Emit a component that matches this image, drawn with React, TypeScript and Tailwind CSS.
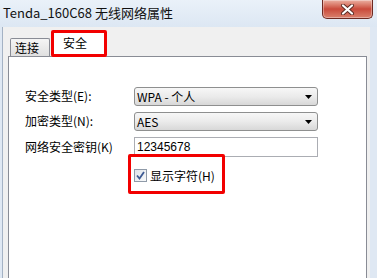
import React from 'react'

function CloseButton() {
  return (
    <div className="mr-[4px] w-[51px] h-[19px] rounded-b-[5px] border border-t-0 border-[#6e2a22] bg-gradient-to-b from-[#eab0a2] via-[#c94a3b] to-[#d9806d] flex items-center justify-center shadow-[inset_0_0_0_1px_rgba(255,255,255,0.35)]">
      <svg width="15" height="11" viewBox="0 0 15 11">
        <path d="M3 1.5 L12 9.5 M12 1.5 L3 9.5" stroke="#5a2a22" strokeWidth="4" strokeLinecap="round" />
        <path d="M3 1.5 L12 9.5 M12 1.5 L3 9.5" stroke="#ffffff" strokeWidth="2.2" strokeLinecap="round" />
      </svg>
    </div>
  )
}

function ComboBox({ value }: { value: string }) {
  return (
    <div className="h-[19px] rounded-[3px] border border-[#8e8f8f] bg-gradient-to-b from-[#f7f7f7] via-[#ebebeb] to-[#d8d8d8] flex items-center justify-between pl-[2px] pr-[5px]">
      <span className="text-[12px] leading-[17px]">{value}</span>
      <svg width="7" height="4" viewBox="0 0 7 4">
        <path d="M0 0 H7 L3.5 4 Z" fill="#000" />
      </svg>
    </div>
  )
}

export default function App() {
  return (
    <div className="w-[377px] h-[278px] overflow-hidden flex flex-col bg-[#dfe8f3] font-['Noto_Sans_CJK_SC',sans-serif] text-black">
      {/* title bar */}
      <div className="h-[27px] shrink-0 flex items-start justify-between bg-gradient-to-b from-[#eaf1f9] to-[#dce7f3]">
        <div className="pl-[3px] pt-[4px] text-[13px] leading-[18px] text-[#111]">Tenda_160C68 无线网络属性</div>
        <CloseButton />
      </div>

      {/* window body */}
      <div className="flex-1 flex flex-col ml-[2px] mr-[7px] border-l border-[#a4b2c4] bg-[#f0f0f0] pl-[5px] pr-[3px]">
        {/* tabs */}
        <div className="h-[29px] shrink-0 flex items-end pl-[2px]">
          <div className="w-[40px] h-[18px] border border-b-0 border-[#898c95] rounded-t-[2px] bg-gradient-to-b from-[#f5f5f5] to-[#e0e0e0] pl-[4px] text-[12px] leading-[17px]">
            连接
          </div>
          <div className="relative z-10 ml-[2px] mb-[-1px] w-[53px] h-[26px] border border-b-0 border-[#898c95] rounded-t-[2px] bg-white pl-[10px] pt-[2px] text-[12px] leading-[17px]">
            安全
            <div className="absolute left-[-2px] top-[-2px] w-[56px] h-[27px] border-[3px] border-[#f20000] rounded-[2px]" />
          </div>
        </div>

        {/* panel */}
        <div className="h-[260px] shrink-0 bg-white border border-[#898c95] pt-[30px] pl-[16px]">
          <div className="grid grid-cols-[109px_184px] gap-y-[6px] items-center text-[12px] leading-[17px]">
            <div className="-mt-[2px]">安全类型(E):</div>
            <ComboBox value="WPA - 个人" />
            <div className="-mt-[2px]">加密类型(N):</div>
            <ComboBox value="AES" />
            <div className="-mt-[2px]">网络安全密钥(K)</div>
            <div className="h-[20px] border border-[#abadb3] bg-white pl-[2px] flex items-center font-['Liberation_Sans',sans-serif] text-[12px]">
              12345678
            </div>
          </div>

          <div className="relative mt-[10px] ml-[109px] flex items-center gap-[3px] w-fit">
            <div className="w-[13px] h-[13px] border border-[#8f9aa8] bg-gradient-to-br from-[#dfe4ea] to-[#f8f9fa] flex items-center justify-center">
              <svg width="9" height="9" viewBox="0 0 9 9">
                <path d="M1 4.5 L3.5 7.5 L8 1" stroke="#3d5a94" strokeWidth="1.8" fill="none" />
              </svg>
            </div>
            <span className="text-[12px] leading-[17px]">显示字符(H)</span>
            <div className="absolute left-[-6px] top-[-13px] w-[97px] h-[40px] border-[3px] border-[#f20000] rounded-[2px]" />
          </div>
        </div>
      </div>
    </div>
  )
}
